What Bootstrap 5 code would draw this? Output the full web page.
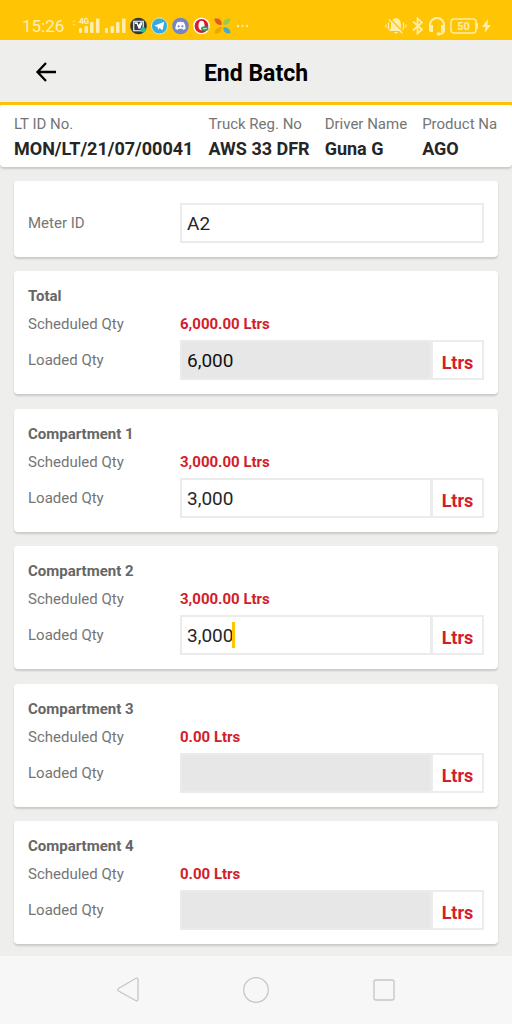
<!DOCTYPE html>
<html lang="en">
<head>
<meta charset="utf-8">
<meta name="viewport" content="width=device-width, initial-scale=1">
<title>End Batch</title>
<link href="https://cdn.jsdelivr.net/npm/bootstrap@5.3.0/dist/css/bootstrap.min.css" rel="stylesheet">
<style>
body { font-family: Roboto, "Liberation Sans", sans-serif; background: #eeeeec; color: #262626; font-size: 15px; line-height: 28px; }
svg { display: block; flex: none; }
.status { background: #ffc505; color: #fff0b8; height: 40px; padding: 12px 21px 0 22px; }
.status-time { font-size: 17px; }
.app-head { height: 65px; border-bottom: 3px solid #fbc10a; color: #000; }
.app-head h1 { font-size: 23px; font-weight: 700; line-height: 28px; padding-top: 6px; }
.back { left: 34px; top: 20px; color: #000; }
.surface { background: #fff; border: 0; border-radius: 4px; box-shadow: 0 2px 2px rgba(0, 0, 0, .15); }
.info { padding: 8px 14px 5px; }
.info-list { gap: 15px; overflow: hidden; }
.info dt { font-size: 15px; line-height: 22px; font-weight: 400; color: #757575; }
.info dd { font-size: 18px; line-height: 27px; font-weight: 700; }
.batch { padding: 14px 14px 12px; }
.meter { padding: 22px 14px 14px; }
.tank { padding: 11px 14px 14px; }
.tank h2 { font-size: 15px; line-height: 28px; font-weight: 700; color: #666; }
.field-name { color: #757575; }
.qty { color: #d2202a; font-weight: 700; }
.loaded { margin-top: 2px; }
.entry { height: 40px; border: 2px solid #ebebeb; border-radius: 0; padding: 1px 5px 0; font-size: 19px; line-height: 28px; color: #262626; }
.entry:disabled { background: #e7e7e7; color: #111; }
.unit { width: 53px; background: #fff; border: 2px solid #ececec; border-radius: 0; padding: 5px 0 0; font-size: 18px; font-weight: 700; color: #d2202a; }
.cursor { left: 53px; top: 7px; width: 3px; height: 26px; background: #ffc505; z-index: 6; }
.sys-nav { height: 68px; background: #f7f7f7; }
.sys-nav .btn { width: 25%; }
</style>
</head>
<body>
<div class="d-flex flex-column min-vh-100">
  <div class="status d-flex align-items-center justify-content-between">
    <div class="d-flex align-items-center">
      <span class="status-time me-2">15:26</span>
      <svg width="28" height="18" viewBox="0 0 28 18" fill="#ffedab" aria-label="4G signal"><path d="M0 5l2-2 2 2zM0 7l2 2 2-2z" opacity=".5"/><path d="M10 1L7.500 5H11.500M10.500 1V7M16 2C13 .5 12.500 2 12.500 4s.5 3 3.500 2V4H14.500" fill="none" stroke="#ffedab" stroke-width="1.300"/><rect x="7" y="11" width="3" height="5" rx="1"/><rect x="12.500" y="9" width="3.500" height="7" rx="1"/><rect x="18" y="5" width="3.500" height="11" rx="1"/><rect x="24" y="1.500" width="3.500" height="14.500" rx="1"/></svg>
      <svg class="ms-1" width="22" height="18" viewBox="0 0 22 18" fill="#ffedab" aria-label="Signal"><rect x="1" y="11" width="3" height="5" rx="1"/><rect x="6.500" y="9" width="3.500" height="7" rx="1"/><rect x="12" y="5" width="3.500" height="11" rx="1"/><rect x="18" y="1.500" width="3.500" height="14.500" rx="1"/></svg>
      <div class="d-flex align-items-center gap-1 ms-1">
        <svg width="17" height="18" viewBox="0 0 18 18"><circle cx="9" cy="9" r="8.800" fill="#313b43"/><path d="M4 4h10v10H4z" fill="none" stroke="#fff" stroke-width="1.200"/><path d="M5 5h3l1 3 2-3h2v1l-2 6H9L7 7H5z" fill="#fff"/><circle cx="14" cy="13" r="2.800" fill="#20c0a4"/></svg>
        <svg width="17" height="18" viewBox="0 0 18 18"><circle cx="9" cy="9" r="8.500" fill="#35a9e1" stroke="#d9edc9"/><path d="M3.500 8.800L14 4.500 12.300 13.500 9 11.200 7.500 13 7 10z" fill="#fff"/></svg>
        <svg width="17" height="18" viewBox="0 0 18 18"><circle cx="9" cy="9" r="8.800" fill="#7487c4"/><path d="M5.500 5Q9 4 12.500 5 14.500 8 14.500 12L12 13.200 11 12H7L6 13.200 3.500 12Q3.500 8 5.500 5z" fill="#fff"/><circle cx="7" cy="9.300" r="1.200" fill="#7487c4"/><circle cx="11" cy="9.300" r="1.200" fill="#7487c4"/></svg>
        <svg width="17" height="18" viewBox="0 0 18 18"><circle cx="9" cy="9" r="8.800" fill="#fff"/><circle cx="9" cy="9" r="7.300" fill="#d51c32"/><ellipse cx="9" cy="8.500" rx="3.200" ry="5" fill="#fff"/><rect x="8.500" y="9.500" width="8" height="4.500" rx="2.200" fill="#28a15a"/><path d="M10.500 11.800h4" stroke="#d5f0dd"/></svg>
        <svg width="17" height="18" viewBox="0 0 18 18"><path d="M.5 1h3.500q5 2 4 7Q.5 8 .5 1z" fill="#e1582c"/><path d="M17.500 1H14q-5 2-4 7 7.500 0 7.500-7z" fill="#9cc84b"/><path d="M.5 17H4q5-2 4-7-7.500 0-7.500 7z" fill="#eba900"/><path d="M17.500 17H14q-5-2-4-7 7.500 0 7.500 7z" fill="#48a9c9"/></svg>
      </div>
      <svg class="ms-1" width="14" height="4" viewBox="0 0 14 4" fill="#ffe999"><circle cx="3" cy="2" r="1.200"/><circle cx="7.500" cy="2" r="1.200"/><circle cx="12" cy="2" r="1.200"/></svg>
    </div>
    <div class="d-flex align-items-center gap-1">
      <svg width="22" height="18" viewBox="0 0 22 18"><path d="M11 1q5 1 5 7v3l2 3H4l2-3V8q0-6 5-7zM9 15h4q-2 3-4 0z" fill="#ffedab"/><path d="M5 1.500l13.500 14" stroke="#ffc505" stroke-width="1.500"/><path d="M4 2.500l13.500 14M1 7.500v3M3.500 5.500v7M18.500 5.500v7M21 7.500v3" stroke="#ffedab" stroke-width="1.200" fill="none"/></svg>
      <svg width="13" height="18" viewBox="0 0 13 18"><path d="M2 4.500l9 8-4.500 4V1.500l4.500 4-9 8" fill="none" stroke="#ffedab" stroke-width="1.700"/></svg>
      <svg width="18" height="20" viewBox="0 0 18 20"><path d="M2 12V9a7 7 0 0 1 14 0v5q0 4-5 4" fill="none" stroke="#ffedab" stroke-width="2"/><path d="M1 9h4v7H3q-2 0-2-2zM17 9h-4v7h2q2 0 2-2z" fill="#ffedab"/><circle cx="10.500" cy="18" r="1.800" fill="#ffedab"/></svg>
      <svg width="28" height="16" viewBox="0 0 28 16"><rect x="1" y="1" width="25" height="14" rx="3" fill="none" stroke="#ffedab" stroke-width="1.500"/><path d="M27 5.500v5" stroke="#ffedab" stroke-width="2"/><text x="13.500" y="12" text-anchor="middle" font-family="Roboto, sans-serif" font-weight="700" font-size="11" fill="#ffedab">50</text></svg>
      <svg width="9" height="14" viewBox="0 0 9 14"><path d="M6 0L0 8h3.500L2.500 14 9 6H5.500z" fill="#ffedab"/></svg>
    </div>
  </div>

  <header class="app-head position-relative d-flex align-items-center justify-content-center">
    <button type="button" class="back btn p-0 border-0 position-absolute" aria-label="Back">
      <svg width="24" height="24" viewBox="0 0 24 24" fill="none" stroke="currentColor" stroke-width="2.300"><path d="M12 3L3.500 12l8.500 9M3.500 12H22"/></svg>
    </button>
    <h1 class="m-0">End Batch</h1>
  </header>

  <section class="info surface">
    <dl class="info-list d-flex m-0 text-nowrap">
      <div class="flex-shrink-0"><dt>LT ID No.</dt><dd class="m-0">MON/LT/21/07/00041</dd></div>
      <div class="flex-shrink-0"><dt>Truck Reg. No</dt><dd class="m-0">AWS 33 DFR</dd></div>
      <div class="flex-shrink-0"><dt>Driver Name</dt><dd class="m-0">Guna G</dd></div>
      <div class="flex-shrink-0"><dt>Product Na</dt><dd class="m-0">AGO</dd></div>
    </dl>
  </section>

  <main class="batch flex-grow-1 d-flex flex-column justify-content-between">
    <section class="meter surface">
      <div class="row gx-0 align-items-center">
        <label class="field-name col-4" for="meter">Meter ID</label>
        <div class="col-8"><input id="meter" class="entry form-control" type="text" value="A2"></div>
      </div>
    </section>

    <section class="tank surface">
      <h2 class="m-0">Total</h2>
      <div class="row gx-0"><span class="field-name col-4">Scheduled Qty</span><span class="qty col-8">6,000.00 Ltrs</span></div>
      <div class="loaded row gx-0 align-items-center">
        <label class="field-name col-4" for="total">Loaded Qty</label>
        <div class="col-8"><div class="input-group"><input id="total" class="entry form-control" type="text" value="6,000" disabled><span class="unit input-group-text justify-content-center">Ltrs</span></div></div>
      </div>
    </section>

    <section class="tank surface">
      <h2 class="m-0">Compartment 1</h2>
      <div class="row gx-0"><span class="field-name col-4">Scheduled Qty</span><span class="qty col-8">3,000.00 Ltrs</span></div>
      <div class="loaded row gx-0 align-items-center">
        <label class="field-name col-4" for="c1">Loaded Qty</label>
        <div class="col-8"><div class="input-group"><input id="c1" class="entry form-control" type="text" value="3,000"><span class="unit input-group-text justify-content-center">Ltrs</span></div></div>
      </div>
    </section>

    <section class="tank surface">
      <h2 class="m-0">Compartment 2</h2>
      <div class="row gx-0"><span class="field-name col-4">Scheduled Qty</span><span class="qty col-8">3,000.00 Ltrs</span></div>
      <div class="loaded row gx-0 align-items-center">
        <label class="field-name col-4" for="c2">Loaded Qty</label>
        <div class="col-8"><div class="input-group position-relative"><input id="c2" class="entry form-control" type="text" value="3,000"><span class="unit input-group-text justify-content-center">Ltrs</span><i class="cursor position-absolute"></i></div></div>
      </div>
    </section>

    <section class="tank surface">
      <h2 class="m-0">Compartment 3</h2>
      <div class="row gx-0"><span class="field-name col-4">Scheduled Qty</span><span class="qty col-8">0.00 Ltrs</span></div>
      <div class="loaded row gx-0 align-items-center">
        <label class="field-name col-4" for="c3">Loaded Qty</label>
        <div class="col-8"><div class="input-group"><input id="c3" class="entry form-control" type="text" disabled><span class="unit input-group-text justify-content-center">Ltrs</span></div></div>
      </div>
    </section>

    <section class="tank surface">
      <h2 class="m-0">Compartment 4</h2>
      <div class="row gx-0"><span class="field-name col-4">Scheduled Qty</span><span class="qty col-8">0.00 Ltrs</span></div>
      <div class="loaded row gx-0 align-items-center">
        <label class="field-name col-4" for="c4">Loaded Qty</label>
        <div class="col-8"><div class="input-group"><input id="c4" class="entry form-control" type="text" disabled><span class="unit input-group-text justify-content-center">Ltrs</span></div></div>
      </div>
    </section>
  </main>

  <nav class="sys-nav d-flex align-items-center justify-content-center" aria-label="System">
    <button type="button" class="btn p-0 border-0 d-flex justify-content-center" aria-label="Back"><svg width="28" height="28" viewBox="0 0 28 28" fill="none" stroke="#c6c6c6" stroke-width="1.300"><path d="M21.500 2.500Q24 1.500 24 4V23q0 2.500-2.500 1.500L4.500 15q-1.500-1.500 0-2.500z"/></svg></button>
    <button type="button" class="btn p-0 border-0 d-flex justify-content-center" aria-label="Home"><svg width="28" height="28" viewBox="0 0 28 28" fill="none" stroke="#c6c6c6" stroke-width="1.300"><circle cx="14" cy="14" r="12.300"/></svg></button>
    <button type="button" class="btn p-0 border-0 d-flex justify-content-center" aria-label="Recent apps"><svg width="28" height="28" viewBox="0 0 28 28" fill="none" stroke="#c6c6c6" stroke-width="1.300"><rect x="4" y="4" width="20" height="20" rx="2"/></svg></button>
  </nav>
</div>
<script src="https://cdn.jsdelivr.net/npm/bootstrap@5.3.0/dist/js/bootstrap.bundle.min.js"></script>
</body>
</html>
